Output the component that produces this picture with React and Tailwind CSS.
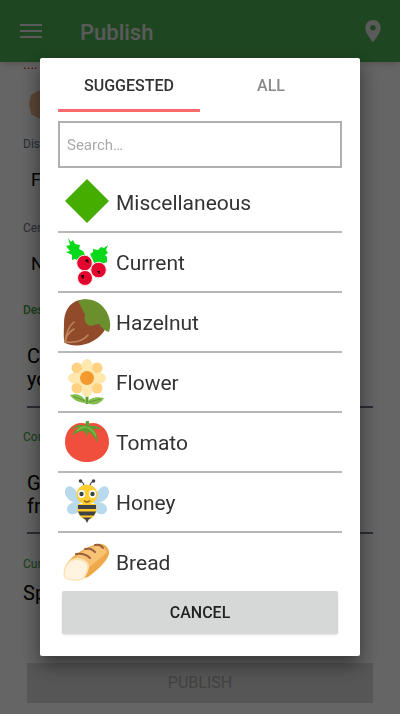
import { useState } from 'react';

const Diamond = () => (
    <svg viewBox="0 0 48 48" className="size-12">
        <path d="M24 1 46 23 24 45 2 23Z" fill="#44ad00" />
    </svg>
);

const Currant = () => (
    <svg viewBox="0 0 48 48" className="size-12">
        <path d="M5 0l3 4 2-2 2 4 5 1-1 4 4 2 3 6-7 4-4-2-3 1v-5l-6-3 4-1-4-5 4-1z" fill="#08d91b" />
        <path d="M45 7l-4 3-3-1-3 3-5-1 0 3-3 2 3 6 1 3 5-1 3 2 5-2v-5l-2-2 3-2-2-3z" fill="#08d91b" />
        <g fill="#e3052d" stroke="#ffe7ec" strokeWidth="1">
            <circle cx="21.500" cy="25" r="7.800" />
            <circle cx="35.500" cy="32" r="7.800" />
            <circle cx="22" cy="40" r="7.500" />
        </g>
        <path d="M22 22l3-1 1 4-3-1zM34 33l3 0 0 3-2-1zM18 37l3 0 0 3-2 1z" fill="#3a0010" />
    </svg>
);

const Hazelnut = () => (
    <svg viewBox="0 0 48 48" className="size-12">
        <path d="M17 2C6 4 1 14 1 25c0 7-1 16 1 20 7 4 20 3 28-2 8-4 14-12 15-20C44 8 31 0 17 2z" fill="#914b2b" />
        <path d="M15 3c8-4 20-1 26 7 5 6 8 16 5 24-4-1-7-4-10-8-4 0-6 2-9 2-5-2-6-6-5-12-3-4-4-8-7-13z" fill="#6a8f2c" />
        <g fill="none" stroke="#bd875d" strokeWidth="1.600" strokeLinecap="round">
            <path d="M2 44C3 35 6 28 11 24" />
            <path d="M2 44c1-6 4-10 9-13" />
            <path d="M3 44c10 1 18-2 22-7" />
        </g>
    </svg>
);

const Flower = () => (
    <svg viewBox="0 0 48 48" className="size-12">
        <path d="M22.500 37h3v9h-3z" fill="#5c9e31" />
        <path d="M24 45C20 37 14 35 7 37c4 6 10 8 17 8zM24 45c2-5 9-7 17-5-3 6-10 8-17 5z" fill="#83bf4f" />
        <path d="M10 38l12 5M38 41l-12 3" stroke="#699635" strokeWidth="1" />
        <g fill="#ffd180">
            <circle cx="14" cy="10" r="5.500" />
            <circle cx="34" cy="10" r="5.500" />
            <circle cx="14" cy="30" r="5.500" />
            <circle cx="34" cy="30" r="5.500" />
        </g>
        <g fill="#ffe8ae">
            <ellipse cx="24" cy="8" rx="5.500" ry="7" />
            <ellipse cx="24" cy="32" rx="5.500" ry="7" />
            <ellipse cx="12" cy="20" rx="7" ry="5.500" />
            <ellipse cx="36" cy="20" rx="7" ry="5.500" />
            <circle cx="24" cy="20" r="10" />
        </g>
        <circle cx="24" cy="20" r="7" fill="#f29a2e" />
    </svg>
);

const Tomato = () => (
    <svg viewBox="0 0 48 48" className="size-12">
        <path d="M24 6C12 2 2 11 2 24c0 12 10 20 22 20s22-8 22-20C46 11 36 2 24 6z" fill="#f04f3e" />
        <path d="M22 8l1-5h3v5c6-1 11 1 13 4-4-2-7-1-9-1 4 4 5 9 4 14-2-6-5-9-9-12l-1 6-3-6c-5 0-9 2-12 5 2-6 6-8 9-8-3-1-6-1-10 2 3-5 9-6 14-4z" fill="#5c9e31" />
        <path d="M24 9c4 2 7 5 9 9M23 9c-4 0-7 1-9 4" fill="none" stroke="#83bf4f" strokeWidth="1.300" />
    </svg>
);

const Bee = () => (
    <svg viewBox="0 0 48 48" className="size-12">
        <g fill="#b9d9ec">
            <path d="M18 25C15 12 8 6 4 9c-5 4-1 17 14 16zM30 25C33 12 40 6 44 9c5 4 1 17-14 16z" />
            <path d="M18 26C11 22 4 26 4 31c0 7 11 8 15-3zM30 26c7-4 14 0 14 5 0 7-11 8-15-3z" />
        </g>
        <path d="M21 8c0-3-1-4-4-5M27 8c0-3 1-4 4-5" fill="none" stroke="#3e4347" strokeWidth="1.200" />
        <circle cx="17.500" cy="3" r="1.800" fill="#3e4347" />
        <circle cx="30.500" cy="3" r="1.800" fill="#3e4347" />
        <path d="M21 39h6l-3 6z" fill="#3e4347" />
        <path d="M15 26h18c2 8-2 15-9 16-7-1-11-8-9-16z" fill="#ffc928" />
        <path d="M15 27h18v4H15zM15 33.500h18l-2 4H17zM19 39.500h10l-5 3z" fill="#3e4347" />
        <ellipse cx="24" cy="16.500" rx="10.500" ry="10" fill="#ffce31" />
        <ellipse cx="18.500" cy="16" rx="3.500" ry="4" fill="#fff" />
        <ellipse cx="29.500" cy="16" rx="3.500" ry="4" fill="#fff" />
        <circle cx="18.500" cy="16" r="2.200" fill="#3e4347" />
        <circle cx="29.500" cy="16" r="2.200" fill="#3e4347" />
        <path d="M21 22.500c2 2 4 2 6 0" fill="none" stroke="#7d5a22" strokeWidth="1.200" />
    </svg>
);

const Bread = () => (
    <svg viewBox="0 0 48 48" className="size-12">
        <path d="M3 27C8 17 27 7 35 6c6-1 12 4 11 10-2 8-14 18-21 23-4 2-13 0-16-2z" fill="#eda94a" />
        <path d="M10 22C17 14 29 8 35 8c5 0 8 2 9 6-5 5-14 12-20 17z" fill="#f7c274" />
        <g fill="none" stroke="#96603c" strokeWidth="2" strokeLinecap="round">
            <path d="M13 16c6-1 10 0 14 4" />
            <path d="M22 11c5-1 7 0 10 3" />
            <path d="M32 7c4-1 6 0 8 3" />
        </g>
        <path d="M1 39c-2-10 4-19 13-19 8 0 13 5 12 10-1 4-3 8-5 11-6 3-18 2-20-2z" fill="#ffe0b0" />
        <path d="M2 38c-1-9 4-16 12-16 7 0 11 4 10 8-1 4-2 7-4 10-5 3-17 2-18-2z" fill="#fff4df" />
    </svg>
);

const categories = [
    { name: 'Miscellaneous', Icon: Diamond },
    { name: 'Current', Icon: Currant },
    { name: 'Hazelnut', Icon: Hazelnut },
    { name: 'Flower', Icon: Flower },
    { name: 'Tomato', Icon: Tomato },
    { name: 'Honey', Icon: Bee },
    { name: 'Bread', Icon: Bread },
];

const PublishPage = () => (
    <div className="flex h-screen flex-col overflow-hidden bg-[#fcfcfc]">
        <header className="z-10 flex h-[62px] shrink-0 items-center bg-[#4caf50] px-5 text-[#e0e0e0] shadow-md">
            <button type="button" aria-label="Open menu">
                <svg viewBox="0 0 22 16" className="h-4 w-[22px]" stroke="currentColor" strokeWidth="2">
                    <path d="M0 2h22M0 8h22M0 14h22" />
                </svg>
            </button>
            <h1 className="ml-[38px] flex-1 pt-[3px] text-[22px] leading-7 font-medium">Publish</h1>
            <button type="button" aria-label="Location" className="-mr-px">
                <svg viewBox="5 2 14 20" className="h-[22px] w-4" fill="currentColor">
                    <path d="M12 2C8.130 2 5 5.130 5 9c0 5.250 7 13 7 13s7-7.750 7-13c0-3.870-3.130-7-7-7zm0 9.500a2.500 2.500 0 1 1 0-5 2.500 2.500 0 0 1 0 5z" />
                </svg>
            </button>
        </header>
        <main className="flex flex-1 flex-col pl-[23px] text-[20px] leading-[23px] text-black">
            <p className="h-2 text-sm leading-1 text-red-600">....</p>
            <svg viewBox="0 0 40 30" className="mt-5 ml-[5px] h-[30px] w-10">
                <path d="M10 1 3 5 1 13l2 11 7 4h28V1z" fill="#e5ae85" />
            </svg>
            <p className="mt-4 text-xs leading-4 text-gray-500">Dis</p>
            <p className="mt-4 ml-2 text-[18px] leading-6">F</p>
            <p className="mt-7 text-xs leading-4 text-gray-500">Cer</p>
            <p className="mt-4 ml-2 text-[18px] leading-6">N</p>
            <p className="mt-[26px] text-xs leading-4 font-medium text-[#43a047]">Des</p>
            <p className="mt-[27px] mr-[27px] ml-1 border-b-2 border-gray-500 pb-[15px]">C<br />yo</p>
            <p className="mt-[21px] text-xs leading-4 text-[#43a047]">Con</p>
            <p className="mt-[27px] mr-[27px] ml-1 border-b-2 border-gray-500 pb-[14px]">G<br />fr</p>
            <p className="mt-[22px] text-xs leading-4 text-[#43a047]">Cur</p>
            <p className="mt-[10px]">Sp</p>
            <button type="button" className="mt-[58px] mr-[27px] ml-1 h-10 shrink-0 bg-[#d6d7d7] text-base text-[#a2a2a2]">PUBLISH</button>
        </main>
    </div>
);

const App = () => {
    const [tab, setTab] = useState('SUGGESTED');
    const [query, setQuery] = useState('');
    const visible = categories.filter(c => c.name.toLowerCase().includes(query.toLowerCase()));

    return (
        <div className="font-[Roboto,sans-serif]">
            <PublishPage />
            <div className="fixed inset-0 z-20 flex items-center bg-black/60 px-10">
                <div role="dialog" aria-label="Choose a category" className="flex w-full flex-col rounded-xs bg-white px-[18px] pb-[22px] shadow-[0_8px_20px_rgba(0,0,0,0.5)]">
                    <div role="tablist" className="grid grid-cols-2">
                        {['SUGGESTED', 'ALL'].map(t => (
                            <button
                                key={t}
                                type="button"
                                role="tab"
                                aria-selected={tab === t}
                                onClick={() => setTab(t)}
                                className={`h-[54px] border-b-[3px] pt-1 text-base font-medium ${tab === t ? 'border-[#ff6a6e] text-[#333]' : 'border-transparent text-[#888]'}`}
                            >
                                {t}
                            </button>
                        ))}
                    </div>
                    <input
                        type="text"
                        aria-label="Search"
                        placeholder="Search…"
                        value={query}
                        onChange={e => setQuery(e.target.value)}
                        className="mt-[9px] h-[47px] w-full border-2 border-[#b0b0b0] px-[7px] pt-px text-[15px] text-[#333] placeholder:text-[#aaa]"
                    />
                    <ul className="mt-[5px] h-[414px] overflow-hidden">
                        {visible.map(({ name, Icon }) => (
                            <li key={name} className="h-[60px] border-b-2 border-[#b8b8b8]">
                                <button type="button" className="flex h-full w-full items-center gap-[5px] pl-[5px] text-left text-[21px] text-[#333]">
                                    <Icon />
                                    <span className="pt-[3px]">{name}</span>
                                </button>
                            </li>
                        ))}
                    </ul>
                    <button type="button" className="mx-1 mt-1 h-[43px] rounded-xs bg-[#d6d8d7] text-base font-medium text-[#222] shadow">
                        CANCEL
                    </button>
                </div>
            </div>
        </div>
    );
};

export default App;
